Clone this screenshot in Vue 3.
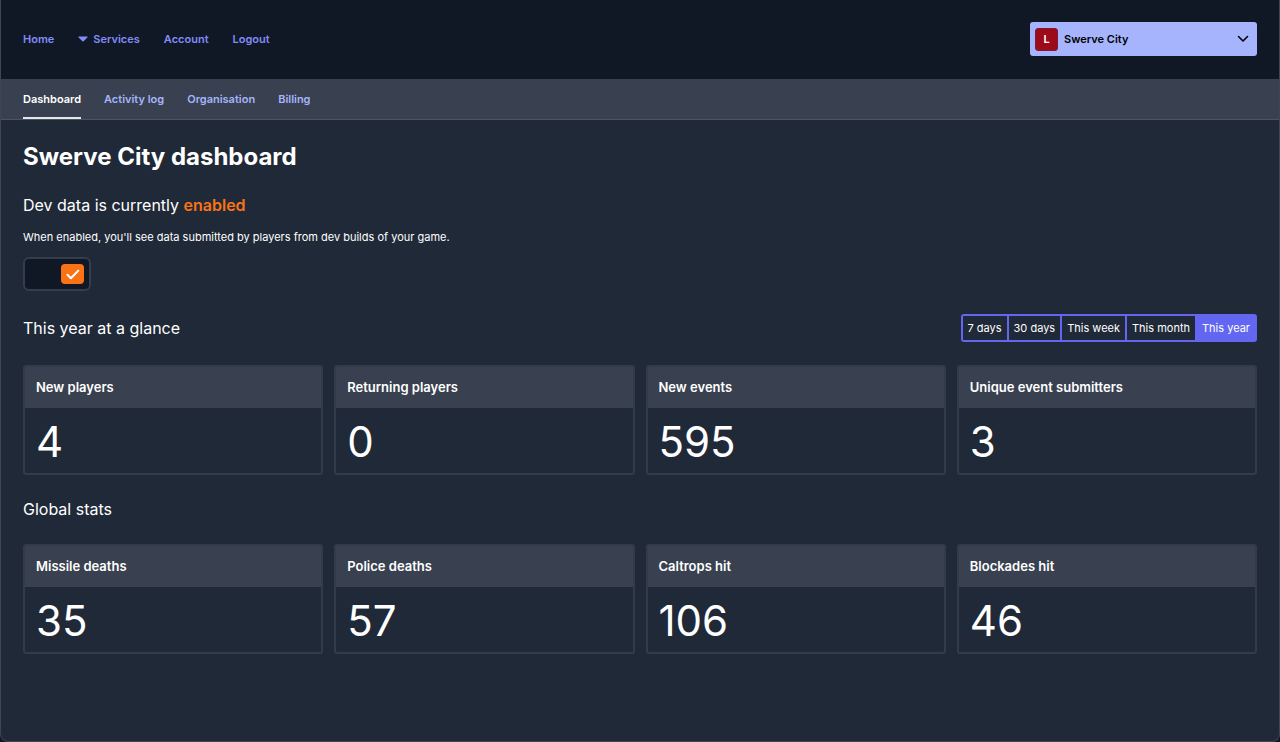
<template>
  <div class="app">
    <header class="topbar">
      <nav class="main-nav" aria-label="Main">
        <a href="#" class="nav-link">Home</a>
        <button type="button" class="nav-link nav-button">
          <svg class="caret" viewBox="0 0 10 6" aria-hidden="true">
            <path d="M1.1 0.4h7.8c0.6 0 0.9 0.6 0.5 1L5.6 5.2c-0.3 0.3-0.9 0.3-1.2 0L0.6 1.4c-0.4-0.4-0.1-1 0.5-1z" fill="currentColor" />
          </svg>
          Services
        </button>
        <a href="#" class="nav-link">Account</a>
        <a href="#" class="nav-link">Logout</a>
      </nav>

      <label class="game-switcher">
        <span class="game-badge" aria-hidden="true">L</span>
        <select v-model="activeGame" class="game-select" aria-label="Active game">
          <option v-for="game in games" :key="game" :value="game">{{ game }}</option>
        </select>
        <svg class="chevron" viewBox="0 0 12 8" aria-hidden="true">
          <path d="M1.5 1.5L6 6l4.5-4.5" fill="none" stroke="currentColor" stroke-width="1.6" stroke-linecap="round" stroke-linejoin="round" />
        </svg>
      </label>
    </header>

    <nav class="sub-nav" aria-label="Secondary">
      <a
        v-for="tab in tabs"
        :key="tab"
        href="#"
        class="sub-link"
        :class="{ 'sub-link-active': tab === activeTab }"
        @click.prevent="activeTab = tab"
      >{{ tab }}</a>
    </nav>

    <main class="content">
      <h1 class="page-title">{{ activeGame }} dashboard</h1>

      <section class="dev-data">
        <h2 class="section-title">
          Dev data is currently <strong class="highlight">{{ devData ? 'enabled' : 'disabled' }}</strong>
        </h2>
        <p class="description">When enabled, you'll see data submitted by players from dev builds of your game.</p>
        <label class="toggle" :class="{ 'toggle-on': devData }">
          <input v-model="devData" type="checkbox" class="toggle-input" aria-label="Dev data" />
          <span class="toggle-knob">
            <svg v-if="devData" class="tick" viewBox="0 0 14 11" aria-hidden="true">
              <path d="M1.5 5.8l3.4 3.4 7.4-7.6" fill="none" stroke="currentColor" stroke-width="2" stroke-linecap="round" stroke-linejoin="round" />
            </svg>
          </span>
        </label>
      </section>

      <section class="stats-section">
        <div class="section-header">
          <h2 class="section-title">{{ period }} at a glance</h2>
          <div class="time-periods">
            <button
              v-for="option in periods"
              :key="option"
              type="button"
              class="period-button"
              :class="{ 'period-active': option === period }"
              @click="period = option"
            >{{ option }}</button>
          </div>
        </div>
        <div class="card-grid">
          <article v-for="stat in headlineStats" :key="stat.title" class="card">
            <h3 class="card-title">{{ stat.title }}</h3>
            <p class="card-value">{{ stat.value }}</p>
          </article>
        </div>
      </section>

      <section class="stats-section">
        <h2 class="section-title">Global stats</h2>
        <div class="card-grid">
          <article v-for="stat in globalStats" :key="stat.title" class="card">
            <h3 class="card-title">{{ stat.title }}</h3>
            <p class="card-value">{{ stat.value }}</p>
          </article>
        </div>
      </section>
    </main>
  </div>
</template>

<script setup>
import { ref } from 'vue';

const games = ['Swerve City'];
const activeGame = ref(games[0]);

const tabs = ['Dashboard', 'Activity log', 'Organisation', 'Billing'];
const activeTab = ref('Dashboard');

const devData = ref(true);

const periods = ['7 days', '30 days', 'This week', 'This month', 'This year'];
const period = ref('This year');

const headlineStats = [
  { title: 'New players', value: 4 },
  { title: 'Returning players', value: 0 },
  { title: 'New events', value: 595 },
  { title: 'Unique event submitters', value: 3 }
];

const globalStats = [
  { title: 'Missile deaths', value: 35 },
  { title: 'Police deaths', value: 57 },
  { title: 'Caltrops hit', value: 106 },
  { title: 'Blockades hit', value: 46 }
];
</script>

<style>
body {
  background-color: #101725;
}
</style>

<style scoped>
.app {
  box-sizing: border-box;
  min-height: 100vh;
  overflow: hidden;
  border: 1px solid #3d4654;
  border-top: none;
  border-radius: 0 0 8px 8px;
  background-color: #202937;
  color: #fff;
  font-family: Inter, "Liberation Sans", sans-serif;
  font-size: 11px;
  line-height: 16px;
}

h1, h2, h3, p {
  margin: 0;
}

.topbar {
  display: flex;
  align-items: center;
  justify-content: space-between;
  padding: 22px 22px 23px;
  background-color: #101725;
}

.main-nav {
  display: flex;
  gap: 24px;
}

.nav-link {
  color: #818cf8;
  font-weight: 600;
  text-decoration: none;
}

.nav-button {
  display: flex;
  align-items: center;
  gap: 5px;
  padding: 0;
  border: none;
  background: none;
  font-family: inherit;
  font-size: inherit;
  line-height: inherit;
  cursor: pointer;
}

.caret {
  width: 10px;
  height: 6px;
}

.game-switcher {
  box-sizing: border-box;
  display: flex;
  align-items: center;
  gap: 6px;
  width: 227px;
  height: 34px;
  padding: 0 8px 0 5px;
  border-radius: 3px;
  background-color: #a5b4fc;
  color: #000;
}

.game-badge {
  box-sizing: border-box;
  width: 23px;
  height: 23px;
  border: 1px solid #7c1a38;
  border-radius: 3px;
  background-color: #9d0b1b;
  color: #fff;
  font-weight: 600;
  line-height: 21px;
  text-align: center;
}

.game-select {
  flex: 1;
  min-width: 0;
  padding: 0;
  border: none;
  appearance: none;
  background: none;
  color: inherit;
  font-family: inherit;
  font-size: inherit;
  font-weight: 600;
  line-height: inherit;
}

.chevron {
  width: 12px;
  height: 8px;
}

.sub-nav {
  display: flex;
  gap: 23px;
  padding: 0 22px;
  border-bottom: 1px solid #4b5563;
  background-color: #394150;
}

.sub-link {
  padding: 12px 0 10px;
  border-bottom: 2px solid transparent;
  color: #a5b4fc;
  font-weight: 600;
  text-decoration: none;
}

.sub-link-active {
  border-bottom-color: #e5e7eb;
  color: #fff;
}

.content {
  display: flex;
  flex-direction: column;
  gap: 23px;
  padding: 23px 22px;
}

.page-title {
  font-size: 24px;
  font-weight: 700;
  line-height: 28px;
}

.section-title {
  font-size: 16px;
  font-weight: 400;
  line-height: 23px;
}

.highlight {
  color: #f97316;
  font-weight: 600;
}

.description {
  margin: 12px 0;
}

.toggle {
  box-sizing: border-box;
  display: flex;
  align-items: center;
  width: 68px;
  height: 34px;
  padding: 0 5px;
  border: 2px solid #343d4b;
  border-radius: 6px;
  background-color: #101725;
  cursor: pointer;
}

.toggle-on {
  justify-content: flex-end;
}

.toggle-input {
  appearance: none;
  width: 0;
  height: 0;
  margin: 0;
}

.toggle-knob {
  display: flex;
  align-items: center;
  justify-content: center;
  width: 23px;
  height: 20px;
  border-radius: 4px;
  background-color: #f97316;
}

.tick {
  width: 14px;
  height: 11px;
}

.stats-section {
  display: flex;
  flex-direction: column;
  gap: 23px;
}

.section-header {
  display: flex;
  align-items: center;
  justify-content: space-between;
}

.time-periods {
  display: flex;
  gap: 2px;
  padding: 2px;
  border-radius: 3px;
  background-color: #6366f1;
}

.period-button {
  padding: 4px 5px;
  border: none;
  background-color: #202937;
  color: #fff;
  font-family: inherit;
  font-size: inherit;
  line-height: inherit;
  cursor: pointer;
}

.period-active {
  background-color: #6366f1;
}

.card-grid {
  display: grid;
  grid-template-columns: repeat(4, 1fr);
  gap: 11px;
}

.card {
  overflow: hidden;
  border: 2px solid #323b49;
  border-radius: 3px;
}

.card-title {
  padding: 8px 11px 9px;
  background-color: #394150;
  font-size: 13px;
  font-weight: 600;
  line-height: 24px;
}

.card-value {
  padding: 10px 11px 7px;
  font-size: 42px;
  line-height: 48px;
}
</style>
